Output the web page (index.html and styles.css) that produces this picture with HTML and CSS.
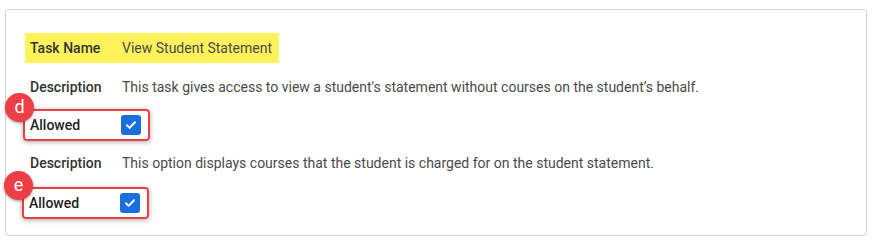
FILE: index.html
```html
<!DOCTYPE html>
<html>
<head>
<meta charset="UTF-8">
<title>Task permissions</title>
<link rel="stylesheet" href="styles.css">
</head>
<body>
<div class="card">
  <div class="row name">
    <span class="label">Task Name</span>
    <span class="value">View Student Statement</span>
  </div>
  <div class="row desc">
    <span class="label">Description</span>
    <span class="value">This task gives access to view a student's statement without courses on the student’s behalf.</span>
  </div>
  <div class="row allowed">
    <span class="badge">d</span>
    <span class="label">Allowed</span>
    <span class="check"><svg width="20" height="20" viewBox="0 0 20 20"><path d="M6 10.3l2.6 2.6 5.4-5.6" fill="none" stroke="#fff" stroke-width="2" stroke-linecap="round" stroke-linejoin="round"/></svg></span>
  </div>
  <div class="row desc second">
    <span class="label">Description</span>
    <span class="value">This option displays courses that the student is charged for on the student statement.</span>
  </div>
  <div class="row allowed last">
    <span class="badge">e</span>
    <span class="label">Allowed</span>
    <span class="check"><svg width="20" height="20" viewBox="0 0 20 20"><path d="M6 10.3l2.6 2.6 5.4-5.6" fill="none" stroke="#fff" stroke-width="2" stroke-linecap="round" stroke-linejoin="round"/></svg></span>
  </div>
</div>
</body>
</html>
```

FILE: styles.css
```css
body { margin: 0; font-family: Roboto, "Liberation Sans", sans-serif; font-size: 14px; color: #333; background: #fff; }
.card { margin: 9px 6px 0 5px; border: 1px solid #d2d2d4; border-radius: 3px; padding: 23px 19px 14px 19px; height: 188px; }
.row { display: flex; align-items: center; height: 30px; }
.label { width: 92px; flex: none; font-weight: 500; color: #333; }
.value { color: #4a4a4a; }
.row.name { display: inline-flex; background: #fff35c; padding: 0 7px 0 5px; }
.row.desc { padding-left: 5px; margin-top: 9px; }
.row.desc.second { margin-top: 7px; }
.row.allowed { position: relative; width: 118px; height: 28px; margin-top: 7px; margin-left: -2px; padding-left: 5px; border: 2px solid #ea4149; border-radius: 4px; box-shadow: 0 1px 5px rgba(0,0,0,0.35); }
.row.allowed.last { margin-top: 9px; margin-left: -3px; }
.row.allowed .label { color: #222; }
.check { width: 20px; height: 20px; margin-left: -1px; background: #1a6fdd; border-radius: 3px; display: flex; }
.badge { position: absolute; left: -20px; top: -18px; width: 29px; height: 29px; border-radius: 50%; background: #ee3f47; color: #fff; font-size: 18px; font-weight: 400; line-height: 27px; text-align: center; box-shadow: 0 1px 3px rgba(0,0,0,0.4); }
```
